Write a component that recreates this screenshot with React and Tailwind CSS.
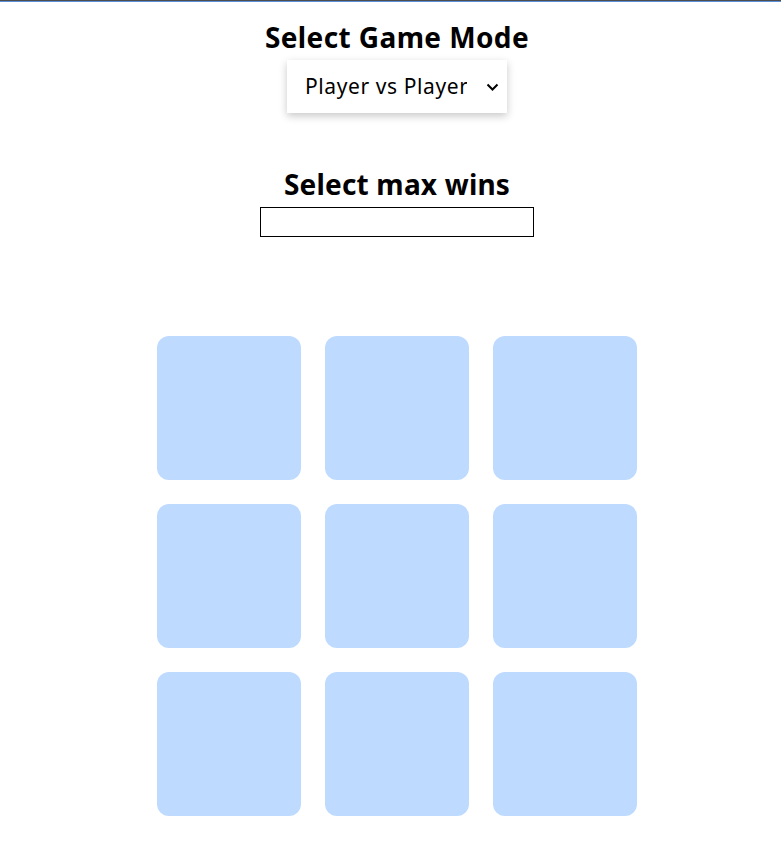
import { useState } from "react";

const App = () => {
  const [mode, setMode] = useState("pvp");
  const [maxWins, setMaxWins] = useState("");
  const cells = Array(9).fill(null);

  return (
    <div className="min-h-screen bg-white font-['Segoe_UI','Noto_Sans',sans-serif] text-black">
      <div className="h-px bg-[#4d4d4d]" />
      <div className="h-px bg-[#5a8fd8]" />
      <div className="flex flex-col items-center pl-[13px] pt-[16px]">
        <h2 className="text-[28px] font-bold leading-[38px] tracking-[0.4px]">Select Game Mode</h2>
        <div className="relative mt-[4px] w-[220px] shadow-[0_3px_8px_rgba(0,0,0,0.22)]">
          <select
            value={mode}
            onChange={(e) => setMode(e.target.value)}
            className="h-[53px] w-full appearance-none bg-white pl-[18px] pr-10 text-[21px] tracking-[0.6px] outline-none"
          >
            <option value="pvp">Player vs Player</option>
            <option value="pvc">Player vs Computer</option>
          </select>
          <svg
            className="pointer-events-none absolute right-[8px] top-[22px]"
            width="13"
            height="10"
            viewBox="0 0 13 10"
          >
            <path d="M1.5 2.5l5 5 5-5" stroke="#000" strokeWidth="2" fill="none" />
          </svg>
        </div>

        <h2 className="mt-[52px] text-[28px] font-bold leading-[38px] tracking-[0.2px]">Select max wins</h2>
        <input
          type="number"
          value={maxWins}
          onChange={(e) => setMaxWins(e.target.value)}
          className="mt-[4px] h-[30px] w-[274px] border border-black px-1 outline-none"
        />

        <div className="mt-[99px] grid grid-cols-3 gap-6">
          {cells.map((c, i) => (
            <button key={i} className="h-36 w-36 rounded-xl bg-blue-200" />
          ))}
        </div>
      </div>
    </div>
  );
};

export default App;
